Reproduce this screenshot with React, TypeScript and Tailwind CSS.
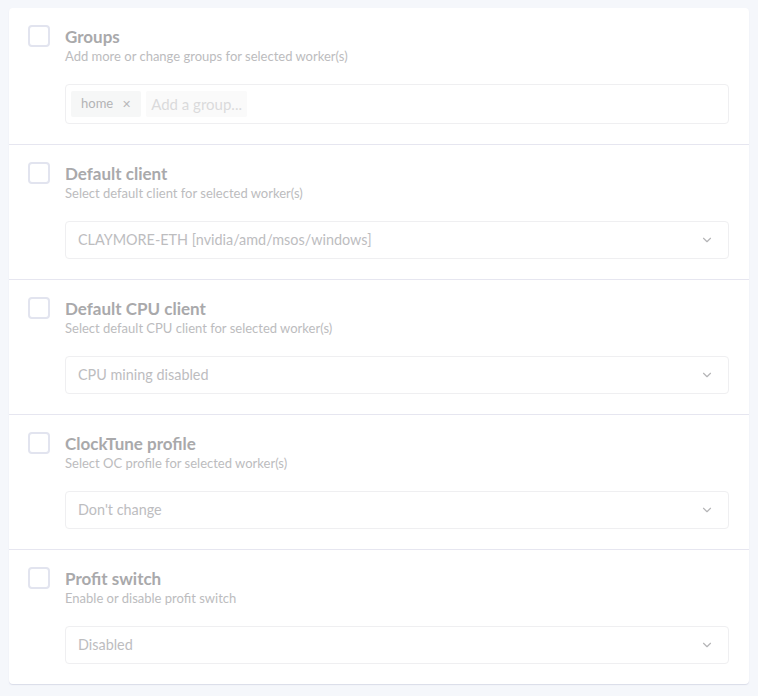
import { ChevronDown } from 'lucide-react';

// --- Data ---
const selects = [
  { title: 'Default client', hint: 'Select default client for selected worker(s)', value: 'CLAYMORE-ETH [nvidia/amd/msos/windows]' },
  { title: 'Default CPU client', hint: 'Select default CPU client for selected worker(s)', value: 'CPU mining disabled' },
  { title: 'ClockTune profile', hint: 'Select OC profile for selected worker(s)', value: "Don't change" },
  { title: 'Profit switch', hint: 'Enable or disable profit switch', value: 'Disabled' },
];

const Checkbox = () => (
  <div className="w-[22px] h-[22px] shrink-0 rounded-[4px] border-2 border-[#e2e4ef] bg-white" />
);

const Heading = ({ title, hint }: { title: string; hint: string }) => (
  <div className="pt-[2px]">
    <div className="text-[17px] leading-[20px] font-bold text-[#a9a9ab]">{title}</div>
    <div className="text-[13px] leading-[16px] text-[#bcbcbe] mt-[1px]">{hint}</div>
  </div>
);

export default function App() {
  return (
    <div className="min-h-[696px] bg-[#f5f7fb] pt-[8px] px-[9px] pb-[10px]" style={{ fontFamily: 'Lato, "Open Sans", sans-serif' }}>
      <div className="bg-white rounded-[4px] shadow-[0_1px_1px_rgba(200,204,220,0.6)]">
        {/* Groups */}
        <div className="flex gap-[15px] pl-[19px] pr-[20px] pt-[17px] pb-[20px] border-b border-[#e6e6f0]">
          <Checkbox />
          <div className="flex-1">
            <Heading title="Groups" hint="Add more or change groups for selected worker(s)" />
            <div className="mt-[20px] h-[40px] rounded-[4px] border border-[#efeff1] flex items-center gap-[5px] px-[5px]">
              <span className="h-[26px] flex items-center gap-[9px] px-[10px] bg-[#f6f7f7] rounded-[2px] text-[13px] text-[#b3b3b5]">
                home <span className="text-[11px] text-[#b9b9bb]">✕</span>
              </span>
              <span className="h-[26px] flex items-center px-[5px] bg-[#fafafa] rounded-[2px] text-[15px] text-[#dadadc]">Add a group...</span>
            </div>
          </div>
        </div>
        {selects.map((s, i) => (
          <div
            key={s.title}
            className={`flex gap-[15px] pl-[19px] pr-[20px] pt-[17px] pb-[20px] ${i < selects.length - 1 ? 'border-b border-[#e6e6f0]' : ''}`}
          >
            <Checkbox />
            <div className="flex-1">
              <Heading title={s.title} hint={s.hint} />
              <div className="mt-[20px] h-[38px] rounded-[4px] border border-[#efeff1] flex items-center justify-between pl-[12px] pr-[14px]">
                <span className="text-[14.4px] text-[#bdbdbf]">{s.value}</span>
                <ChevronDown className="w-[14px] h-[14px] text-[#b5b5b7]" strokeWidth={2} />
              </div>
            </div>
          </div>
        ))}
      </div>
    </div>
  );
}
